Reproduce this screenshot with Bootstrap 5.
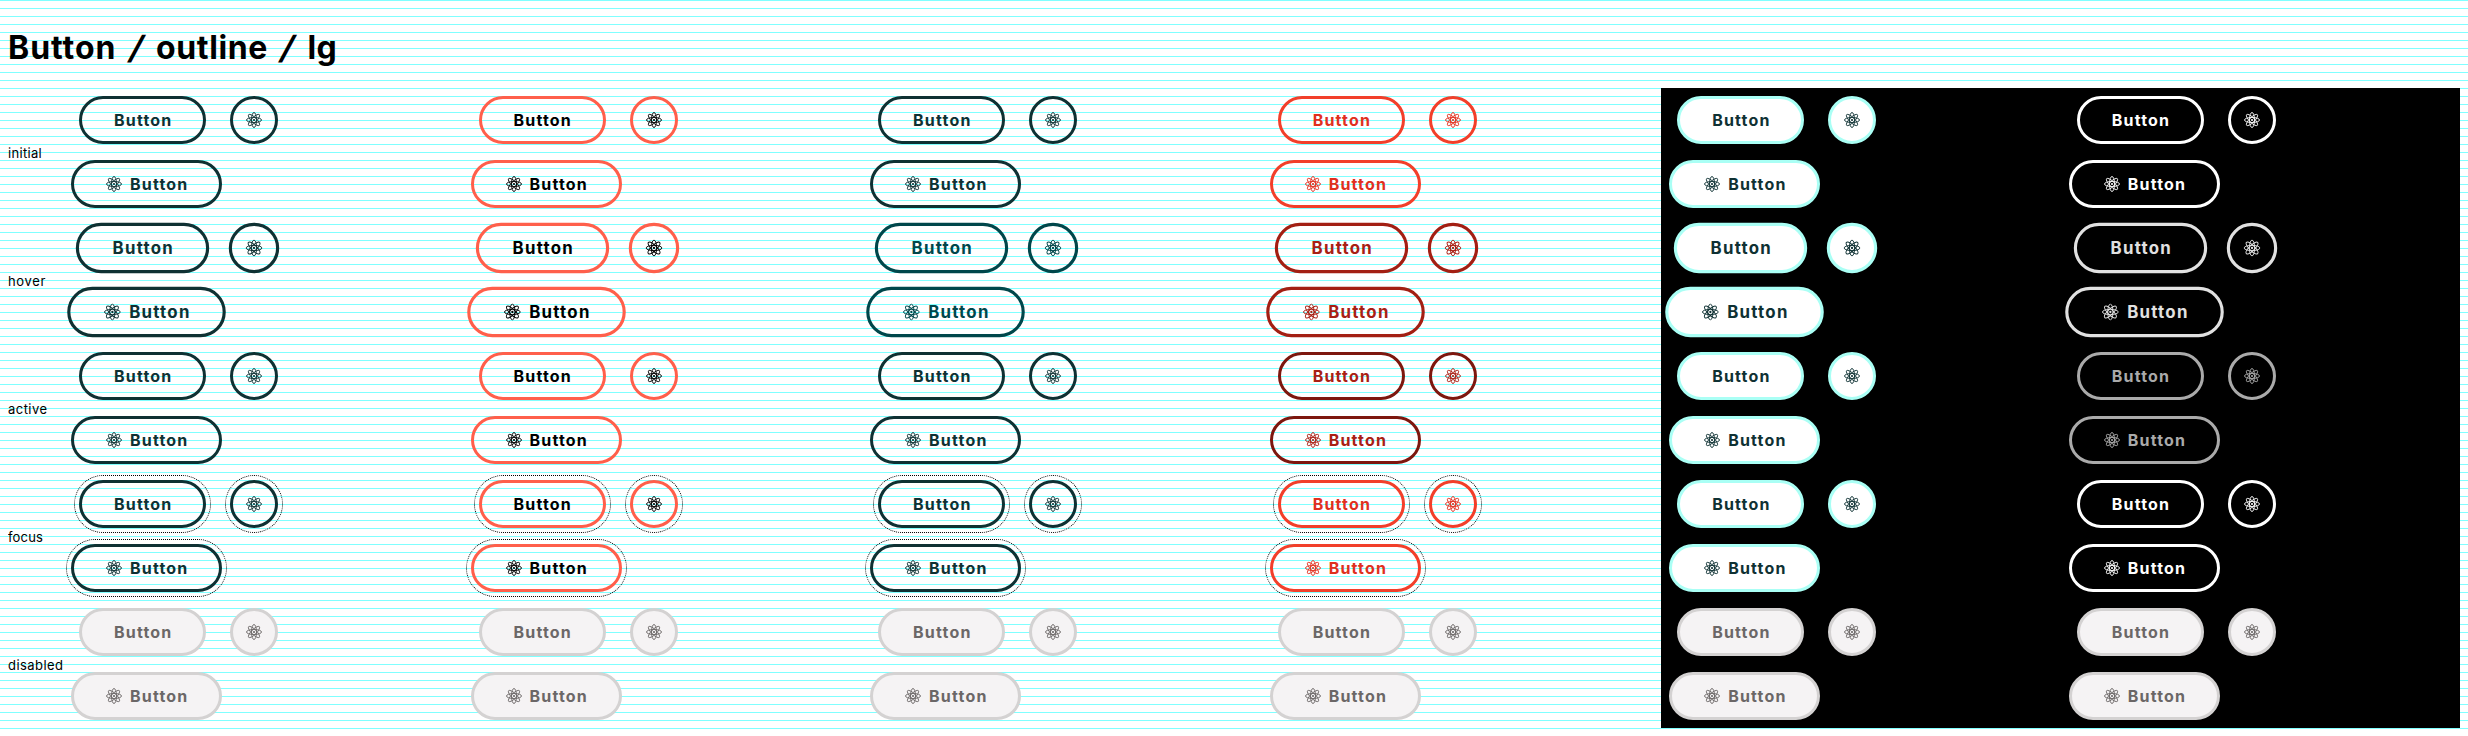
<!DOCTYPE html>
<html lang="en">
<head>
<meta charset="utf-8">
<title>Button / outline / lg</title>
<link href="https://cdn.jsdelivr.net/npm/bootstrap@5.3.0/dist/css/bootstrap.min.css" rel="stylesheet">
<style>
body{background:#fff repeating-linear-gradient(#80ffff 0 1px,transparent 1px 8px);color:#000;font-family:Inter,"Liberation Sans",sans-serif;height:736px;overflow:hidden}
.sheet{padding:0 8px}
.title-row{height:88px;padding:28px 8px 0}
h1{font-size:32px;line-height:40px;font-weight:700;margin:0;white-space:nowrap}
.slash{display:inline-block;transform:skewX(-15deg);width:39.5px;text-align:center}
.state-row{height:128px}
.state-label{width:54.6px;flex:none;font-size:13px;line-height:16px;padding-top:2px}
.cell{width:399.56px;flex:none;padding:8px}
.cell.dark{background:#000}
.line-a{height:48px;gap:24px;padding-left:8.4px;margin-bottom:16px}
.line-b{height:48px;padding-left:.4px}
.pill{--c:#0f3133;--b:#0f3133;box-sizing:border-box;height:48px;width:127px;border:3px solid var(--b);border-radius:24px;color:var(--c);font-weight:700;font-size:16px;line-height:24px;padding:0;display:flex;align-items:center;justify-content:center;gap:8px;background:transparent;flex:none}
.pill span{width:57px;white-space:nowrap;text-align:left}
.pill.wide{width:151px}
.pill.round{width:48px}
.pill svg{width:16px;height:16px;flex:none}
.k1{--c:#000;--b:#ff5f4b}
.k3{--c:#e0301e;--b:#f23f2a}
.k4{--c:#0f3133;--b:#aafff5;background:#fff}
.k5{--c:#fff;--b:#fff}
.hover{transform:scale(1.05)}
.hover.k2{--c:#00474b;--b:#00474b}
.hover.k3{--c:#a82014;--b:#a31f13}
.hover.k5{--c:#e1e1e1;--b:#e1e1e1}
.active.k3{--c:#a82014;--b:#7d170e}
.active.k5{--c:#aaa;--b:#aaa}
.focus{outline:1px dotted #000;outline-offset:4px}
.disabled{--c:#6b6767;--b:#d4d2d2;background:#f5f3f4}
</style>
</head>
<body>
<svg class="d-none"><symbol id="atom" viewBox="0 0 16 16"><g fill="none" stroke="currentColor" stroke-width=".9"><ellipse cx="8" cy="8" rx="2.5" ry="7.55"/><ellipse cx="8" cy="8" rx="7.55" ry="2.5"/><ellipse cx="8" cy="8" rx="2.5" ry="7.55" transform="rotate(45 8 8)"/><ellipse cx="8" cy="8" rx="2.5" ry="7.55" transform="rotate(-45 8 8)"/></g><circle cx="8" cy="8" r="1.1" fill="currentColor"/></symbol></svg>
<header class="title-row"><h1 class="d-flex"><span data-track="108.5">Button</span> <span class="slash">/</span> <span data-track="112">outline</span> <span class="slash">/</span> <span data-track="29.5">lg</span></h1></header>
<main class="sheet" id="sheet"></main>
<script>
const icon = '<svg><use href="#atom"/></svg>', text = '<span><b class="fw-bold" data-track="58.5">Button</b></span>';
const states = {initial: 34, hover: 38, active: 39.5, focus: 35, disabled: 55.5};
document.getElementById('sheet').innerHTML = Object.keys(states).map(s =>
  `<section class="state-row d-flex align-items-center"><div class="state-label"><span data-track="${states[s]}">${s}</span></div>` +
  [0,1,2,3,4,5].map(k => {
    const b = (x, y) => `<button type="button" class="pill k${k} ${s} ${x}">${y}</button>`;
    return `<div class="cell h-100${k > 3 ? ' dark' : ''}"><div class="line-a d-flex">${b('', text)}${b('round', icon)}</div><div class="line-b d-flex">${b('wide', icon + text)}</div></div>`;
  }).join('') + '</section>').join('');
// Track each word out to its specimen width.
document.querySelectorAll('[data-track]').forEach(el => {
  const scale = el.closest('.hover') ? 1.05 : 1;
  const natural = el.getBoundingClientRect().width / scale;
  el.style.letterSpacing = (el.dataset.track - natural) / el.textContent.length + 'px';
});
</script>
<script src="https://cdn.jsdelivr.net/npm/bootstrap@5.3.0/dist/js/bootstrap.bundle.min.js"></script>
</body>
</html>
